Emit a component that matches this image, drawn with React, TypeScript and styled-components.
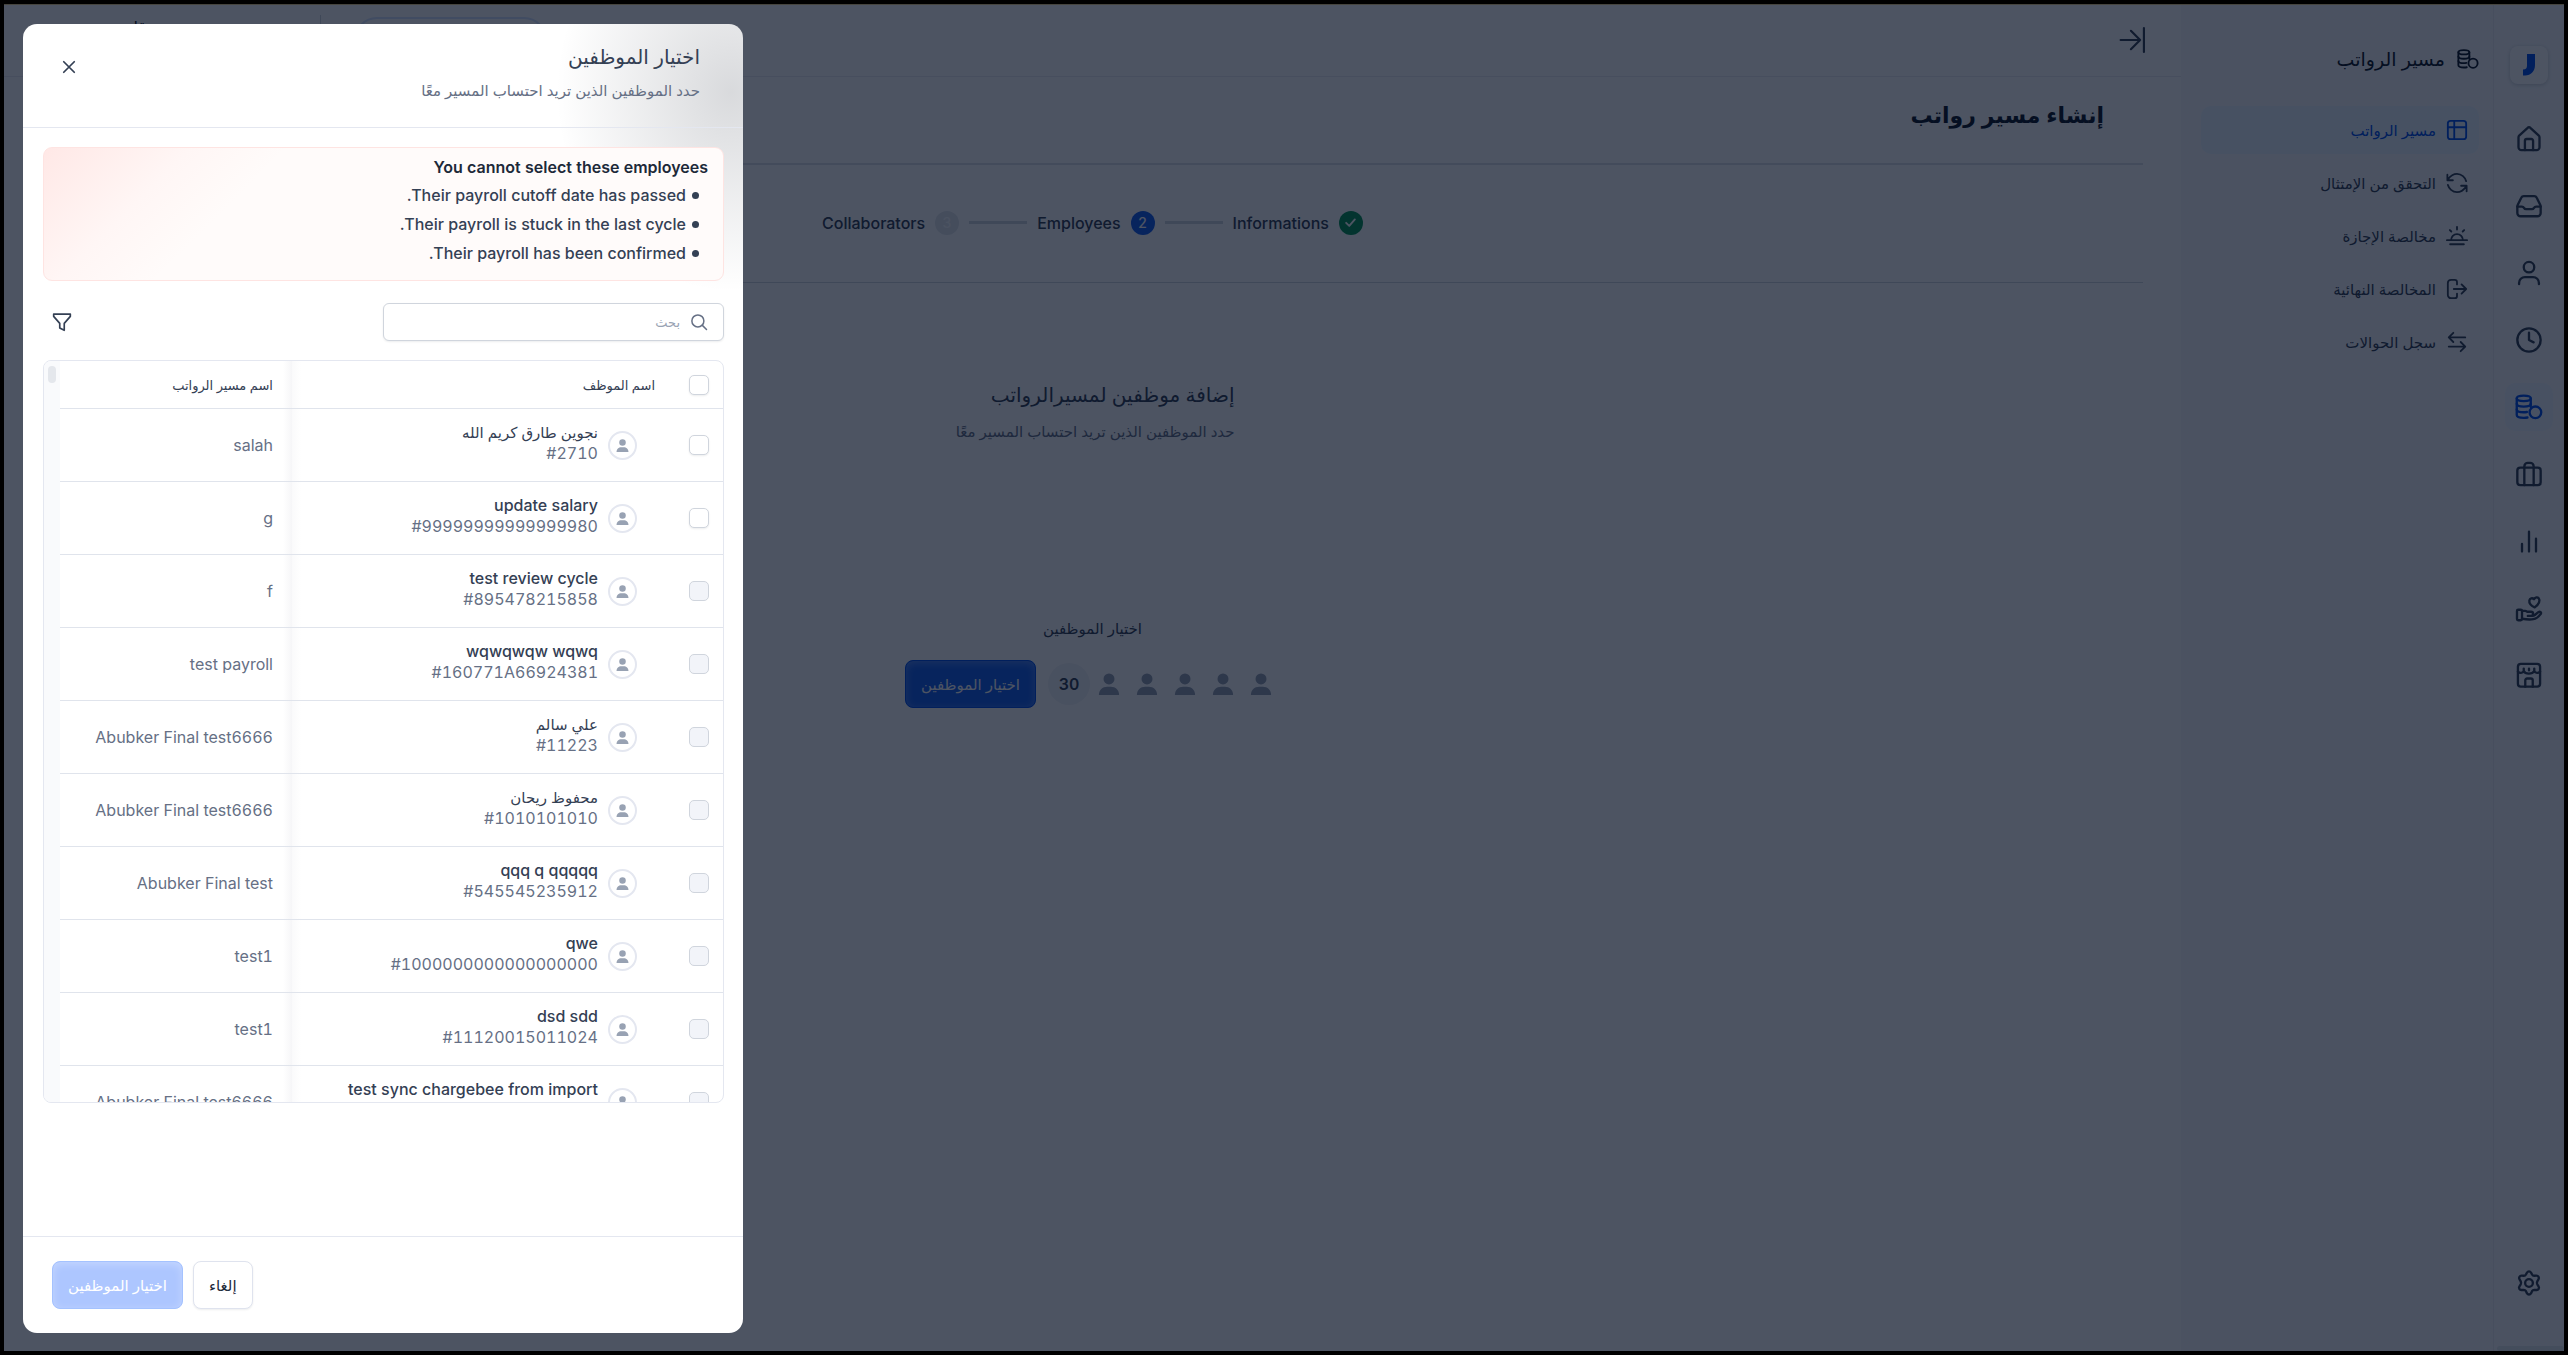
import React from "react";
import styled, { createGlobalStyle, css } from "styled-components";

const GlobalStyle = createGlobalStyle`
  *, *::before, *::after { box-sizing: border-box; }
  body {
    margin: 0;
    background: #000;
    color: #344054;
    font-family: Inter, "DejaVu Sans", sans-serif;
    font-size: 16px;
    font-variant-numeric: tabular-nums;
  }
  h1, h2, h3, p, ul, ol { margin: 0; padding: 0; font-weight: inherit; }
  ul, ol { list-style: none; }
  button, input { font: inherit; color: inherit; }
  button { cursor: pointer; }
  a { color: inherit; text-decoration: none; }
`;

/* ---------- icons ---------- */

const paths: Record<string, React.ReactNode> = {
  home: (
    <>
      <path d="M3 10.6c0-.7.3-1.3.8-1.8l6.8-6.2a2 2 0 0 1 2.8 0l6.8 6.2c.5.5.8 1.1.8 1.8V19a2.5 2.5 0 0 1-2.5 2.5h-13A2.5 2.5 0 0 1 3 19z" />
      <path d="M8.500 21.500V13.500a1.500 1.500 0 0 1 1.500-1.500h4a1.500 1.500 0 0 1 1.500 1.500v8" />
    </>
  ),
  inbox: (
    <>
      <path d="M2 12.500h3.900c.8 0 1.400.4 1.800 1.100s1 1.100 1.800 1.100h5c.8 0 1.400-.4 1.800-1.100s1-1.100 1.800-1.100H22" />
      <path d="M7.500 3.500h9c1 0 1.600.3 2 1.200l3.100 6.300c.3.600.4 1 .4 1.600v5.400a2.800 2.800 0 0 1-2.800 2.800H4.800A2.800 2.800 0 0 1 2 18v-5.400c0-.6.1-1 .4-1.600l3.100-6.300c.4-.9 1-1.200 2-1.200z" />
    </>
  ),
  user: (
    <>
      <circle cx="12" cy="7" r="4.500" />
      <path d="M3.500 21.500v-1a5 5 0 0 1 5-5h7a5 5 0 0 1 5 5v1" />
    </>
  ),
  clock: (
    <>
      <circle cx="12" cy="12" r="10" />
      <path d="M12 5.800V12l4 2" />
    </>
  ),
  coins: (
    <>
      <path d="M1.500 4.600C1.500 3 4 2.300 7.500 2.300S13.500 3 13.500 4.600 11 7 7.500 7 1.500 6.200 1.500 4.600z" />
      <path d="M13.500 4.600v7.400M1.500 4.600v14.300c0 1.600 2.500 2.400 6 2.400 1.200 0 2.300-.1 3.200-.3" />
      <path d="M1.500 9.300c0 1.600 2.500 2.400 6 2.400s6-.8 6-2.400M1.500 14.100c0 1.600 2.500 2.400 6 2.400 1 0 1.900-.1 2.700-.2" />
      <circle cx="17.500" cy="16.600" r="5" />
    </>
  ),
  briefcase: (
    <>
      <rect x="2" y="6.500" width="20" height="15" rx="2.500" />
      <path d="M8 21.500V5.500A3 3 0 0 1 11 2.500h2a3 3 0 0 1 3 3v16" />
    </>
  ),
  chart: <path d="M6 21v-6.500M12 21V4M18 21V10" />,
  heartHand: (
    <>
      <rect x="1.700" y="13.500" width="4.300" height="9" rx="1" />
      <path d="M6 14.500h2.600c.8 0 1.300.3 1.900.7h3.200a1.800 1.800 0 0 1 0 3.600H11h4c.8 0 1.500-.3 2-.8l3-2.400c1.500-1 3 .3 1.900 1.700-1.700 2.400-3.900 4-6.200 4.300-3 .6-5.300.4-9.700-.4" />
      <path d="M16.900 11.500c-3.200-1.500-5-3.300-4.600-5.900.4-2 2.600-2.600 4-1.100 1.100-1.800 3-2 4-.8 1.500 1.900.4 5-3.400 7.800z" />
    </>
  ),
  shop: (
    <>
      <rect x="2.500" y="2.500" width="19" height="19.500" rx="2.500" />
      <path d="M2.500 9c1.300 1.800 4 1.600 5-.4 1.300 3 7.300 3 9 0 1 2 3.700 2.200 5 .4M7.500 9V6.500M12 8V6.500M16.500 9V6.500M8.800 22v-5.400a1.600 1.600 0 0 1 1.600-1.600h3.200a1.600 1.600 0 0 1 1.600 1.600V22" />
    </>
  ),
  gear: (
    <>
      <circle cx="12" cy="12" r="3.300" />
      <path d="M10.300 3a2 2 0 0 1 3.400 0l.9 1.700c.4.700 1 1.100 1.800 1.100l2-.1a2 2 0 0 1 1.800 3l-1.100 1.900c-.4.800-.4 1.700 0 2.500l1.100 1.800a2 2 0 0 1-1.800 3.100l-2-.1c-.8 0-1.400.4-1.800 1.100l-.9 1.900a2 2 0 0 1-3.400 0L9.400 19c-.4-.7-1-1.100-1.800-1.100l-2 .1a2 2 0 0 1-1.800-3.100l1.100-1.800c.4-.8.4-1.700 0-2.500L3.800 8.700a2 2 0 0 1 1.800-3l2 .1c.8 0 1.400-.4 1.800-1.100z" />
    </>
  ),
  layout: (
    <>
      <rect x="2" y="2" width="20" height="20" rx="3" />
      <path d="M2 9h20M9 2v20" />
    </>
  ),
  refresh: (
    <>
      <path d="M22 10c-1-4-5-8-10-8-4 0-7 2-9.800 6M1.500 3v6h6" />
      <path d="M2 14c1 4 5 8 10 8 4 0 7-2 9.800-6M22.500 21v-6h-6" />
    </>
  ),
  sunset: <path d="M12 2v3M4.200 5.500l1.600 1.600M19.800 5.500l-1.600 1.600M1 16.500h22M5.500 16.500a6.500 6.500 0 0 1 13 0M4.500 21h15" />,
  logout: <path d="M17 7l5 5-5 5M22 12H8.500M12 7V4.500A2.500 2.500 0 0 0 9.500 2h-4A3.500 3.500 0 0 0 2 5.500v13A3.500 3.500 0 0 0 5.500 22h4a2.500 2.500 0 0 0 2.500-2.500V17" />,
  transfer: <path d="M21 7H3.500M8 2L3 7l5 5M3 17h17.500M16 12l5 5-5 5" />,
  collapse: <path d="M1.500 12h18M11 3.500l8.500 8.500-8.500 8.500M23 1v22" />,
  close: <path d="M3 3l18 18M21 3L3 21" />,
  search: (
    <>
      <circle cx="10.500" cy="10.500" r="8" />
      <path d="M16.500 16.500L22 22" />
    </>
  ),
  filter: <path d="M2 2.500h20v2.800l-7.300 8.400V22l-5.400-2.700v-5.600L2 5.300z" />,
  check: <path d="M5 12.500l5 5L19 7" />,
};

const Svg = styled.svg<{ $w: number }>`
  display: block;
  flex: none;
  fill: none;
  stroke: currentColor;
  stroke-width: ${(p) => p.$w};
  stroke-linecap: round;
  stroke-linejoin: round;
`;

const Icon = ({ name, size = 28, w = 2 }: { name: string; size?: number; w?: number }) => (
  <Svg $w={w} width={size} height={size} viewBox="0 0 24 24" aria-hidden="true">
    {paths[name]}
  </Svg>
);

const Person = ({ size }: { size: number }) => (
  <svg width={size} height={size} viewBox="0 0 24 24" fill="currentColor" aria-hidden="true">
    <circle cx="12" cy="6.500" r="6" />
    <path d="M1 24c0-5.500 3.800-9 9-9h4c5.200 0 9 3.500 9 9z" />
  </svg>
);

/* ---------- shell ---------- */

const Frame = styled.div`
  position: relative;
  display: flex;
  min-height: 100vh;
  border: 4px solid #000;
  background: #fff;
`;

const Rail = styled.nav`
  display: flex;
  flex-direction: column;
  align-items: center;
  flex: none;
  width: 71px;
  padding-top: 42px;
  background: #f8f9fc;
  border-left: 1px solid #eaecf0;
`;

const Logo = styled.a`
  display: grid;
  place-items: center;
  width: 38px;
  height: 38px;
  margin-bottom: 31px;
  border-radius: 8px;
  background: #fff;
  box-shadow: 0 1px 4px rgba(16, 24, 40, 0.2);
`;

const RailList = styled.ul`
  display: flex;
  flex-direction: column;
  gap: 19px;
  flex: 1;
  & > li:last-child { margin-top: auto; }
`;

const RailThumb = styled.div`
  align-self: flex-start;
  width: 67px;
  height: 5px;
  margin-top: 39px;
  border-radius: 3px;
  background: #e0e6ec;
`;

const RailLink = styled.a<{ $active?: boolean }>`
  display: grid;
  place-items: center;
  width: 48px;
  height: 48px;
  border-radius: 10px;
  color: ${(p) => (p.$active ? "#004eeb" : "#344054")};
  background: ${(p) => (p.$active ? "#eef6fd" : "transparent")};
`;

const SubMenu = styled.aside`
  flex: none;
  width: 312px;
  padding: 33px 14px 0 20px;
  background: #f8f9fc;
`;

const SubTitle = styled.h2`
  display: flex;
  align-items: center;
  gap: 12px;
  height: 44px;
  margin-bottom: 25px;
  font-size: 19px;
  font-weight: 500;
  color: #101828;
`;

const SubList = styled.ul`
  display: flex;
  flex-direction: column;
  gap: 5px;
`;

const SubLink = styled.a<{ $active?: boolean }>`
  display: flex;
  align-items: center;
  gap: 10px;
  height: 48px;
  padding: 0 11px;
  border-radius: 10px;
  font-size: 15px;
  color: ${(p) => (p.$active ? "#004eeb" : "#344054")};
  background: ${(p) => (p.$active ? "#eaf6ff" : "transparent")};
`;

const Main = styled.main`
  flex: 1;
  min-width: 0;
`;

const TopBar = styled.header`
  display: flex;
  align-items: center;
  justify-content: space-between;
  height: 73px;
  padding: 0 36px 0 60px;
  border-bottom: 1px solid #eaecf0;
`;

const IconButton = styled.button`
  display: grid;
  place-items: center;
  padding: 0;
  border: 0;
  background: none;
`;

const Account = styled.div`
  display: flex;
  align-items: center;
  gap: 33px;
`;

const Pill = styled.button`
  width: 193px;
  height: 46px;
  border: 2px solid #d5e4ff;
  border-radius: 24px;
  background: #fff;
  font-size: 14px;
`;

const AccountName = styled.span`
  width: 257px;
  height: 50px;
  padding: 0 174px 0 0;
  border-right: 1px solid #d0d5dd;
  line-height: 24px;
  white-space: nowrap;
  color: #101828;
`;

const Content = styled.div`
  padding: 0 38px;
`;

const PageTitle = styled.h1`
  height: 88px;
  padding: 0 39px;
  border-bottom: 2px solid #dde1e8;
  line-height: 76px;
  font-size: 22px;
  font-weight: 700;
  color: #101828;
`;

const Steps = styled.ol`
  display: flex;
  align-items: center;
  justify-content: center;
  gap: 10px;
  height: 118px;
  padding-bottom: 2px;
  border-bottom: 1px solid #d0d5dd;
`;

const Step = styled.li`
  display: flex;
  align-items: center;
  gap: 10px;
  font-weight: 500;
`;

const StepLine = styled.li`
  width: 58px;
  height: 3px;
  background: #d0d5dd;
`;

const StepDot = styled.span<{ $state: "done" | "now" | "next" }>`
  display: grid;
  place-items: center;
  width: 24px;
  height: 24px;
  border-radius: 50%;
  font-size: 14px;
  color: #fff;
  ${(p) => p.$state === "done" && css`background: #079455;`}
  ${(p) => p.$state === "now" && css`background: #155eef;`}
  ${(p) => p.$state === "next" && css`background: #e4e7ec; color: #f9fafb;`}
`;

const Intro = styled.section`
  width: 284px;
  margin: 92px auto 0;
`;

const IntroTitle = styled.h2`
  line-height: 40px;
  font-size: 20px;
  font-weight: 500;
  white-space: nowrap;
`;

const Muted = styled.p`
  line-height: 34px;
  font-size: 15px;
  white-space: nowrap;
  color: #667085;
`;

const Picker = styled.section`
  display: flex;
  flex-direction: column;
  align-items: center;
  gap: 14px;
  margin-top: 163px;
`;

const PickerLabel = styled.h3`
  line-height: 34px;
  font-size: 15px;
`;

const PickerRow = styled.div`
  display: flex;
  align-items: center;
  gap: 12px;
`;

const Faces = styled.div`
  display: flex;
  align-items: center;
  color: #98a2b3;
`;

const Face = styled.span`
  display: grid;
  place-items: center;
  width: 38px;
  height: 42px;
`;

const Count = styled.span`
  display: grid;
  place-items: center;
  width: 42px;
  height: 42px;
  border-radius: 50%;
  background: #f2f4f7;
  font-weight: 600;
  color: #344054;
`;

const Button = styled.button<{ $primary?: boolean }>`
  height: 48px;
  padding: 0 15px;
  border: 1px solid #dfe3ee;
  border-radius: 8px;
  background: #fff;
  box-shadow: 0 1px 2px rgba(16, 24, 40, 0.08);
  font-size: 15px;
  white-space: nowrap;
  color: #1d2939;
  ${(p) =>
    p.$primary &&
    css`
      border-color: #004eeb;
      background: #155eef;
      box-shadow: inset 0 2px 8px rgba(255, 255, 255, 0.3);
      color: #fff;
    `}
  &:disabled {
    border-color: #a4c2ff;
    background: #adc6ff;
    cursor: default;
  }
`;

/* ---------- dialog ---------- */

const Overlay = styled.div`
  position: absolute;
  inset: 0;
  display: flex;
  justify-content: flex-end;
  padding: 20px 19px 18px;
  background: rgba(2, 12, 31, 0.7);
  box-shadow: inset 0 1px 0 #46453f;
`;

const Dialog = styled.section`
  display: flex;
  flex-direction: column;
  width: 720px;
  border-radius: 14px;
  overflow: hidden;
  color: #344054;
  background:
    radial-gradient(ellipse 175px 200px at 708px 68px, rgba(16, 24, 40, 0.16), rgba(16, 24, 40, 0.08) 50%, transparent) no-repeat,
    #fff;
`;

const DialogHead = styled.header`
  display: flex;
  align-items: center;
  justify-content: space-between;
  height: 104px;
  padding: 0 43px 18px 39px;
  border-bottom: 1px solid #e4e7f0;
`;

const DialogTitles = styled.div`
  padding-top: 14px;
`;

const DialogTitle = styled.h2`
  line-height: 34px;
  font-size: 20px;
  font-weight: 500;
`;

const DialogBody = styled.div`
  flex: 1;
  min-height: 0;
  padding: 19px 19px 0 20px;
`;

const Alert = styled.div`
  height: 134px;
  padding: 6px 15px;
  border: 1px solid #fee4e2;
  border-radius: 9px;
  background: linear-gradient(135deg, #ffe8e6, #fff6f5 18%, #fffbfa 30%);
`;

const AlertTitle = styled.p`
  line-height: 27px;
  font-weight: 600;
  color: #1d2939;
`;

const AlertItem = styled.li`
  display: flex;
  align-items: center;
  gap: 6px;
  padding-right: 9px;
  line-height: 29px;
  font-weight: 500;
  &::before {
    content: "";
    width: 7px;
    height: 7px;
    border-radius: 50%;
    background: currentColor;
  }
`;

const Tools = styled.div`
  display: flex;
  align-items: center;
  justify-content: space-between;
  margin: 22px 0 19px;
  padding-left: 9px;
`;

const SearchBox = styled.label`
  display: flex;
  align-items: center;
  gap: 10px;
  width: 341px;
  height: 38px;
  padding: 0 15px;
  border: 1px solid #d0d5dd;
  border-radius: 6px;
  background: #fff;
  box-shadow: 0 1px 2px rgba(16, 24, 40, 0.08);
  color: #667085;
`;

const SearchInput = styled.input`
  flex: 1;
  min-width: 0;
  padding: 0;
  border: 0;
  outline: 0;
  background: none;
  font-size: 13px;
  &::placeholder { color: #98a2b3; opacity: 1; }
`;

const TableCard = styled.div`
  display: flex;
  height: calc(100vh - 612px);
  border: 1px solid #e4e7f0;
  border-radius: 8px;
  overflow: hidden;
`;

const TableClip = styled.div`
  flex: 1;
  overflow: hidden;
`;

const ScrollTrack = styled.div`
  width: 16px;
  padding: 5px 4px;
  background: #f9fafc;
`;

const ScrollThumb = styled.div`
  width: 8px;
  height: 17px;
  border-radius: 4px;
  background: #e4e7ec;
`;

const Table = styled.table`
  width: 100%;
  table-layout: fixed;
  border-collapse: separate;
  border-spacing: 0;
  th, td {
    padding: 0;
    border-bottom: 1px solid #e0e4ec;
    text-align: right;
    font-weight: 400;
  }
  th { height: 48px; font-size: 13px; }
  td { height: 73px; }
  th:first-child, td:first-child { width: 54px; padding-right: 14px; }
  th:nth-child(2) { padding-right: 14px; }
  td:nth-child(2) { padding-right: 32px; }
  th:nth-child(2), td:nth-child(2) {
    background: linear-gradient(to right, #fafafb, #fff 9px);
  }
  th:last-child, td:last-child {
    width: 232px;
    padding-right: 19px;
    background: linear-gradient(to left, #f6f6f8, #fff 9px);
  }
`;

const Check = styled.input`
  display: block;
  appearance: none;
  width: 20px;
  height: 20px;
  margin: 0;
  border: 1px solid #d0d5dd;
  border-radius: 5px;
  background: #fff;
  box-shadow: 0 1px 2px rgba(16, 24, 40, 0.08);
  &:disabled { background: #f2f4f9; box-shadow: none; }
`;

const Employee = styled.div`
  display: flex;
  align-items: center;
  gap: 10px;
`;

const Avatar = styled.span`
  display: grid;
  place-items: center;
  width: 29px;
  height: 29px;
  border: 2px solid #e4e7f0;
  border-radius: 50%;
  background: #fff;
  color: #98a2b3;
`;

const NameBlock = styled.div`
  line-height: 21px;
  padding-bottom: 4px;
`;

const Name = styled.div<{ $arabic: boolean }>`
  font-size: ${(p) => (p.$arabic ? 15 : 16)}px;
  font-weight: 500;
  color: #344054;
`;

const Soft = styled.div`
  min-height: 21px;
  color: #667085;
`;

const DialogFoot = styled.footer`
  display: flex;
  align-items: center;
  justify-content: flex-end;
  gap: 10px;
  height: 97px;
  padding: 0 29px;
  border-top: 1px solid #e4e7f0;
`;

/* ---------- data ---------- */

const railItems = ["home", "inbox", "user", "clock", "coins", "briefcase", "chart", "heartHand", "shop", "gear"];

const subItems = [
  { icon: "layout", text: "مسير الرواتب" },
  { icon: "refresh", text: "التحقق من الإمتثال" },
  { icon: "sunset", text: "مخالصة الإجازة" },
  { icon: "logout", text: "المخالصة النهائية" },
  { icon: "transfer", text: "سجل الحوالات" },
];

const employees = [
  { name: "نجوين طارق كريم الله", id: "2710", payroll: "salah", open: true },
  { name: "update salary", id: "99999999999999980", payroll: "g", open: true },
  { name: "test review cycle", id: "895478215858", payroll: "f" },
  { name: "wqwqwqw wqwq", id: "160771A66924381", payroll: "test payroll" },
  { name: "علي سالم", id: "11223", payroll: "Abubker Final test6666" },
  { name: "محفوظ ريحان", id: "1010101010", payroll: "Abubker Final test6666" },
  { name: "qqq q qqqqq", id: "545545235912", payroll: "Abubker Final test" },
  { name: "qwe", id: "1000000000000000000", payroll: "test1" },
  { name: "dsd sdd", id: "11120015011024", payroll: "test1" },
  { name: "test sync chargebee from import", id: "", payroll: "Abubker Final test6666" },
];

const isArabic = (s: string) => /[\u0600-\u06ff]/.test(s);

const hint = "حدد الموظفين الذين تريد احتساب المسير معًا";
const pick = "اختيار الموظفين";

export default function App() {
  return (
    <>
      <GlobalStyle />
      <Frame dir="rtl" lang="ar">
        <Rail>
          <Logo href="#" aria-label="Jisr">
            <svg width="14" height="22" viewBox="0 0 14 22" fill="#004eeb" aria-hidden="true">
              <path d="M5 0h8v11c0 6-4 10.500-10 10.500H1V15.500c3 0 4-1.500 4-4z" />
            </svg>
          </Logo>
          <RailList>
            {railItems.map((name) => (
              <li key={name}>
                <RailLink href="#" aria-label={name} $active={name === "coins"}>
                  <Icon name={name} />
                </RailLink>
              </li>
            ))}
          </RailList>
          <RailThumb />
        </Rail>

        <SubMenu>
          <SubTitle>
            <Icon name="coins" size={22} />
            مسير الرواتب
          </SubTitle>
          <SubList>
            {subItems.map((item, i) => (
              <li key={item.icon}>
                <SubLink href="#" $active={i === 0}>
                  <Icon name={item.icon} size={22} />
                  {item.text}
                </SubLink>
              </li>
            ))}
          </SubList>
        </SubMenu>

        <Main>
          <TopBar>
            <IconButton type="button" aria-label="طي القائمة">
              <Icon name="collapse" size={26} />
            </IconButton>
            <Account>
              <Pill type="button" aria-label="مساعدة" />
              <AccountName>قا</AccountName>
            </Account>
          </TopBar>
          <Content>
            <PageTitle>إنشاء مسير رواتب</PageTitle>
            <Steps>
              <Step>
                <StepDot $state="done">
                  <Icon name="check" size={15} w={3} />
                </StepDot>
                Informations
              </Step>
              <StepLine />
              <Step>
                <StepDot $state="now">2</StepDot>
                Employees
              </Step>
              <StepLine />
              <Step>
                <StepDot $state="next">3</StepDot>
                Collaborators
              </Step>
            </Steps>
            <Intro>
              <IntroTitle>إضافة موظفين لمسيرالرواتب</IntroTitle>
              <Muted>{hint}</Muted>
            </Intro>
            <Picker>
              <PickerLabel>{pick}</PickerLabel>
              <PickerRow>
                <Faces>
                  {[0, 1, 2, 3, 4].map((i) => (
                    <Face key={i}>
                      <Person size={22} />
                    </Face>
                  ))}
                  <Count>30</Count>
                </Faces>
                <Button type="button" $primary>
                  {pick}
                </Button>
              </PickerRow>
            </Picker>
          </Content>
        </Main>

        <Overlay>
          <Dialog role="dialog" aria-modal="true" aria-labelledby="pick-title">
            <DialogHead>
              <DialogTitles>
                <DialogTitle id="pick-title">{pick}</DialogTitle>
                <Muted>{hint}</Muted>
              </DialogTitles>
              <IconButton type="button" aria-label="إغلاق">
                <Icon name="close" size={14} w={3} />
              </IconButton>
            </DialogHead>
            <DialogBody>
              <Alert>
                <AlertTitle>You cannot select these employees</AlertTitle>
                <ul>
                  <AlertItem>Their payroll cutoff date has passed.</AlertItem>
                  <AlertItem>Their payroll is stuck in the last cycle.</AlertItem>
                  <AlertItem>Their payroll has been confirmed.</AlertItem>
                </ul>
              </Alert>
              <Tools>
                <SearchBox>
                  <Icon name="search" size={18} />
                  <SearchInput type="search" placeholder="بحث" aria-label="بحث" />
                </SearchBox>
                <IconButton type="button" aria-label="تصفية">
                  <Icon name="filter" size={20} />
                </IconButton>
              </Tools>
              <TableCard>
                <TableClip>
                  <Table>
                    <thead>
                      <tr>
                        <th>
                          <Check type="checkbox" aria-label="تحديد الكل" />
                        </th>
                        <th>اسم الموظف</th>
                        <th>اسم مسير الرواتب</th>
                      </tr>
                    </thead>
                    <tbody>
                      {employees.map((e) => (
                        <tr key={e.name}>
                          <td>
                            <Check type="checkbox" aria-label={e.name} disabled={!e.open} />
                          </td>
                          <td>
                            <Employee>
                              <Avatar>
                                <Person size={13} />
                              </Avatar>
                              <NameBlock>
                                <Name $arabic={isArabic(e.name)}>{e.name}</Name>
                                <Soft>{e.id && `#${e.id}`}</Soft>
                              </NameBlock>
                            </Employee>
                          </td>
                          <td>
                            <Soft>{e.payroll}</Soft>
                          </td>
                        </tr>
                      ))}
                    </tbody>
                  </Table>
                </TableClip>
                <ScrollTrack>
                  <ScrollThumb />
                </ScrollTrack>
              </TableCard>
            </DialogBody>
            <DialogFoot>
              <Button type="button">إلغاء</Button>
              <Button type="button" $primary disabled>
                {pick}
              </Button>
            </DialogFoot>
          </Dialog>
        </Overlay>
      </Frame>
    </>
  );
}
